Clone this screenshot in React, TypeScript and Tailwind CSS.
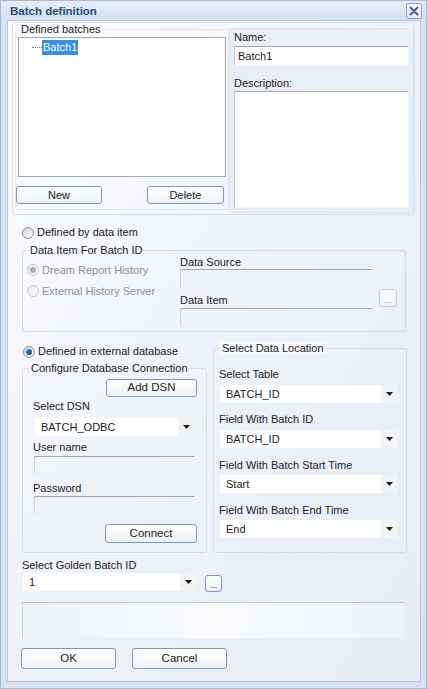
import React from "react";

function Radio({ checked, disabled }: { checked?: boolean; disabled?: boolean }) {
  return (
    <span
      className={
        "flex h-[12px] w-[12px] shrink-0 items-center justify-center rounded-full border bg-gradient-to-br " +
        (disabled
          ? "border-[#c4c8ce] from-[#e4e6ea] to-[#fafbfc]"
          : "border-[#8e8f94] from-[#d2d4d8] to-[#fbfbfc]")
      }
    >
      {checked && (
        <span
          className={
            "h-[6px] w-[6px] rounded-full " +
            (disabled ? "bg-[#a9acb2]" : "bg-gradient-to-br from-[#4d88c8] to-[#163f73]")
          }
        />
      )}
    </span>
  );
}

function Btn({ className, children, disabled }: { className: string; children: React.ReactNode; disabled?: boolean }) {
  return (
    <div
      className={
        "flex items-center justify-center rounded-[3px] border bg-gradient-to-b " +
        (disabled
          ? "border-[#c9ced6] from-[#fbfbfc] to-[#f1f3f6] text-[#9aa0a8] "
          : "border-[#7f97b2] from-[#ffffff] to-[#edf1f6] text-[#1b1b1b] ") +
        className
      }
    >
      {children}
    </div>
  );
}

function Arrow() {
  return (
    <svg width="7" height="4" viewBox="0 0 7 4">
      <path d="M0 0 H7 L3.5 4 Z" fill="#1e1e1e" />
    </svg>
  );
}

function Select({ className, value }: { className: string; value: string }) {
  return (
    <div className={"flex items-center justify-between bg-white " + className}>
      <span className="pl-[6px] leading-[12px]">{value}</span>
      <span className="flex h-full w-[17px] items-center justify-center bg-[#f2f3f5]">
        <Arrow />
      </span>
    </div>
  );
}

function Sunken({ className }: { className: string }) {
  return (
    <div
      className={
        "border border-[#eef1f5] border-t-[#a3a6ab] border-l-[#cfd3d9] " + className
      }
    />
  );
}

export default function App() {
  return (
    <div className="flex h-[689px] w-[427px] flex-col overflow-hidden border border-[#a7bad4] bg-[#d7e3f2] font-['Segoe_UI','Liberation_Sans',Arial,sans-serif] text-[11px] text-[#1b1b1b]">
      {/* Title bar */}
      <div className="flex h-[19px] shrink-0 items-center justify-between bg-gradient-to-b from-[#e6eef8] to-[#d3e0f0] pl-[9px] pr-[4px]">
        <span className="text-[11.5px] font-bold leading-[14px] text-[#2c4a7a]">Batch definition</span>
        <div className="flex h-[16px] w-[16px] items-center justify-center rounded-[2px] border border-[#8aa3c4] bg-gradient-to-b from-[#fbfcfe] to-[#dfe8f4]">
          <svg width="10" height="10" viewBox="0 0 10 10">
            <path d="M1.5 1.5 L8.5 8.5 M8.5 1.5 L1.5 8.5" stroke="#3b5886" strokeWidth="1.8" strokeLinecap="round" />
          </svg>
        </div>
      </div>

      {/* Body */}
      <div className="flex flex-1 pb-[5px] pl-[6px] pr-[5px]">
        <div className="flex h-[662px] w-[414px] flex-col border border-[#b4c6dd] bg-gradient-to-br from-[#fdfdfe] via-[#eef2f9] to-[#e6ecf5]">
          {/* Section A */}
          <div className="ml-[4px] mt-[1px] flex h-[193px] w-[403px] rounded-[3px] border border-[#d6dfeb]">
            <fieldset className="ml-[2px] h-[187px] w-[214px] rounded-[3px] border border-[#e2e8f0]">
              <legend className="ml-[4px] px-[1px] leading-[12px]">Defined batches</legend>
              <div className="ml-[2px] mt-[2px] h-[140px] w-[208px] border border-[#a2a8b0] bg-white pt-[2px]">
                <div className="flex items-center pl-[13px]">
                  <span className="w-[10px] border-t border-dotted border-[#7a7a7a]" />
                  <span className="bg-[#3b8fe0] px-[1px] leading-[15px] text-white">Batch1</span>
                </div>
              </div>
              <div className="mt-[9px] flex w-[208px] justify-between">
                <Btn className="h-[18px] w-[86px]">New</Btn>
                <Btn className="h-[18px] w-[77px]">Delete</Btn>
              </div>
            </fieldset>
            <div className="ml-[0px] mt-[5px] flex h-[185px] w-[185px] flex-col rounded-[3px] border border-[#dde5f0] bg-[#e9eef6] pl-[4px]">
              <span className="mt-[2px] leading-[12px]">Name:</span>
              <div className="mt-[3px] flex h-[20px] w-[175px] items-center border border-[#f4f6f9] border-t-[#a3a6ab] border-l-[#c6cad0] bg-white pl-[3px]">
                Batch1
              </div>
              <span className="mt-[11px] leading-[12px]">Description:</span>
              <div className="mt-[2px] h-[117px] w-[175px] border border-[#f4f6f9] border-t-[#a3a6ab] border-l-[#c6cad0] bg-white" />
            </div>
          </div>

          {/* Defined by data item */}
          <div className="ml-[14px] mt-[11px] flex h-[13px] items-center gap-[3px]">
            <Radio />
            <span>Defined by data item</span>
          </div>
          <fieldset className="ml-[14px] mt-[5px] h-[88px] w-[384px] rounded-[3px] border border-[#d4dce7]">
            <legend className="ml-[6px] px-[1px] leading-[12px]">Data Item For Batch ID</legend>
            <div className="flex">
              <div className="flex w-[157px] flex-col gap-[9px] pl-[4px] pt-[8px] text-[#8c9096]">
                <div className="flex h-[12px] items-center gap-[3px]">
                  <Radio checked disabled />
                  <span>Dream Report History</span>
                </div>
                <div className="flex h-[12px] items-center gap-[3px]">
                  <Radio disabled />
                  <span>External History Server</span>
                </div>
              </div>
              <div className="flex flex-col">
                <span className="mt-[0px] leading-[12px]">Data Source</span>
                <Sunken className="mt-[1px] h-[20px] w-[193px]" />
                <span className="mt-[5px] leading-[12px]">Data Item</span>
                <Sunken className="mt-[2px] h-[19px] w-[193px]" />
              </div>
              <Btn disabled className="ml-[6px] mt-[33px] h-[18px] w-[18px] items-end pb-[3px] text-[9px] leading-[6px]">
                ...
              </Btn>
            </div>
          </fieldset>

          {/* External database */}
          <div className="ml-[14px] mt-[10px] flex">
            <div className="flex flex-col">
              <div className="mt-[3px] flex h-[13px] items-center gap-[3px] pl-[1px]">
                <Radio checked />
                <span>Defined in external database</span>
              </div>
              <fieldset className="mt-[4px] flex h-[191px] w-[185px] flex-col rounded-[3px] border border-[#d4dce7]">
                <legend className="ml-[7px] px-[1px] leading-[12px]">Configure Database Connection</legend>
                <div className="flex justify-end pr-[9px] pt-[5px]">
                  <Btn className="h-[18px] w-[91px] text-[11.5px]">Add DSN</Btn>
                </div>
                <span className="ml-[10px] mt-[3px] leading-[12px]">Select DSN</span>
                <Select className="ml-[12px] mt-[6px] h-[18px] w-[160px]" value="BATCH_ODBC" />
                <span className="ml-[10px] mt-[5px] leading-[12px]">User name</span>
                <Sunken className="ml-[11px] mt-[3px] h-[18px] w-[161px]" />
                <span className="ml-[10px] mt-[8px] leading-[12px]">Password</span>
                <Sunken className="ml-[11px] mt-[2px] h-[18px] w-[161px]" />
                <div className="flex justify-end pr-[9px] pt-[10px]">
                  <Btn className="h-[19px] w-[92px] text-[11.5px]">Connect</Btn>
                </div>
              </fieldset>
            </div>
            <fieldset className="ml-[6px] flex h-[211px] w-[194px] flex-col rounded-[3px] border border-[#d4dce7]">
              <legend className="ml-[6px] bg-white/60 px-[2px] leading-[12px]">Select Data Location</legend>
              <span className="ml-[5px] mt-[14px] leading-[12px]">Select Table</span>
              <Select className="ml-[6px] mt-[5px] h-[18px] w-[178px]" value="BATCH_ID" />
              <span className="ml-[5px] mt-[10px] leading-[12px]">Field With Batch ID</span>
              <Select className="ml-[6px] mt-[5px] h-[18px] w-[178px]" value="BATCH_ID" />
              <span className="ml-[5px] mt-[11px] leading-[12px]">Field With Batch Start Time</span>
              <Select className="ml-[6px] mt-[4px] h-[18px] w-[178px]" value="Start" />
              <span className="ml-[5px] mt-[11px] leading-[12px]">Field With Batch End Time</span>
              <Select className="ml-[6px] mt-[4px] h-[18px] w-[178px]" value="End" />
            </fieldset>
          </div>

          {/* Golden batch */}
          <span className="ml-[14px] mt-[6px] leading-[12px]">Select Golden Batch ID</span>
          <div className="ml-[15px] mt-[2px] flex items-start">
            <Select className="h-[18px] w-[174px]" value="1" />
            <Btn className="ml-[8px] mt-[2px] h-[17px] w-[17px] items-end pb-[3px] text-[9px] leading-[6px]">...</Btn>
          </div>
          <div className="ml-[14px] mt-[10px] h-[36px] w-[384px] border border-b-0 border-[#e3e7ee] border-t-[#c3c7cd] border-l-[#cdd1d7] bg-gradient-to-r from-[#eef2f8] via-[#f9fbfd] to-[#eef2f8]" />

          {/* OK / Cancel */}
          <div className="ml-[13px] mt-[10px] flex gap-[16px]">
            <Btn className="h-[21px] w-[95px] text-[11.5px]">OK</Btn>
            <Btn className="h-[21px] w-[95px] text-[11.5px]">Cancel</Btn>
          </div>
        </div>
      </div>
    </div>
  );
}
